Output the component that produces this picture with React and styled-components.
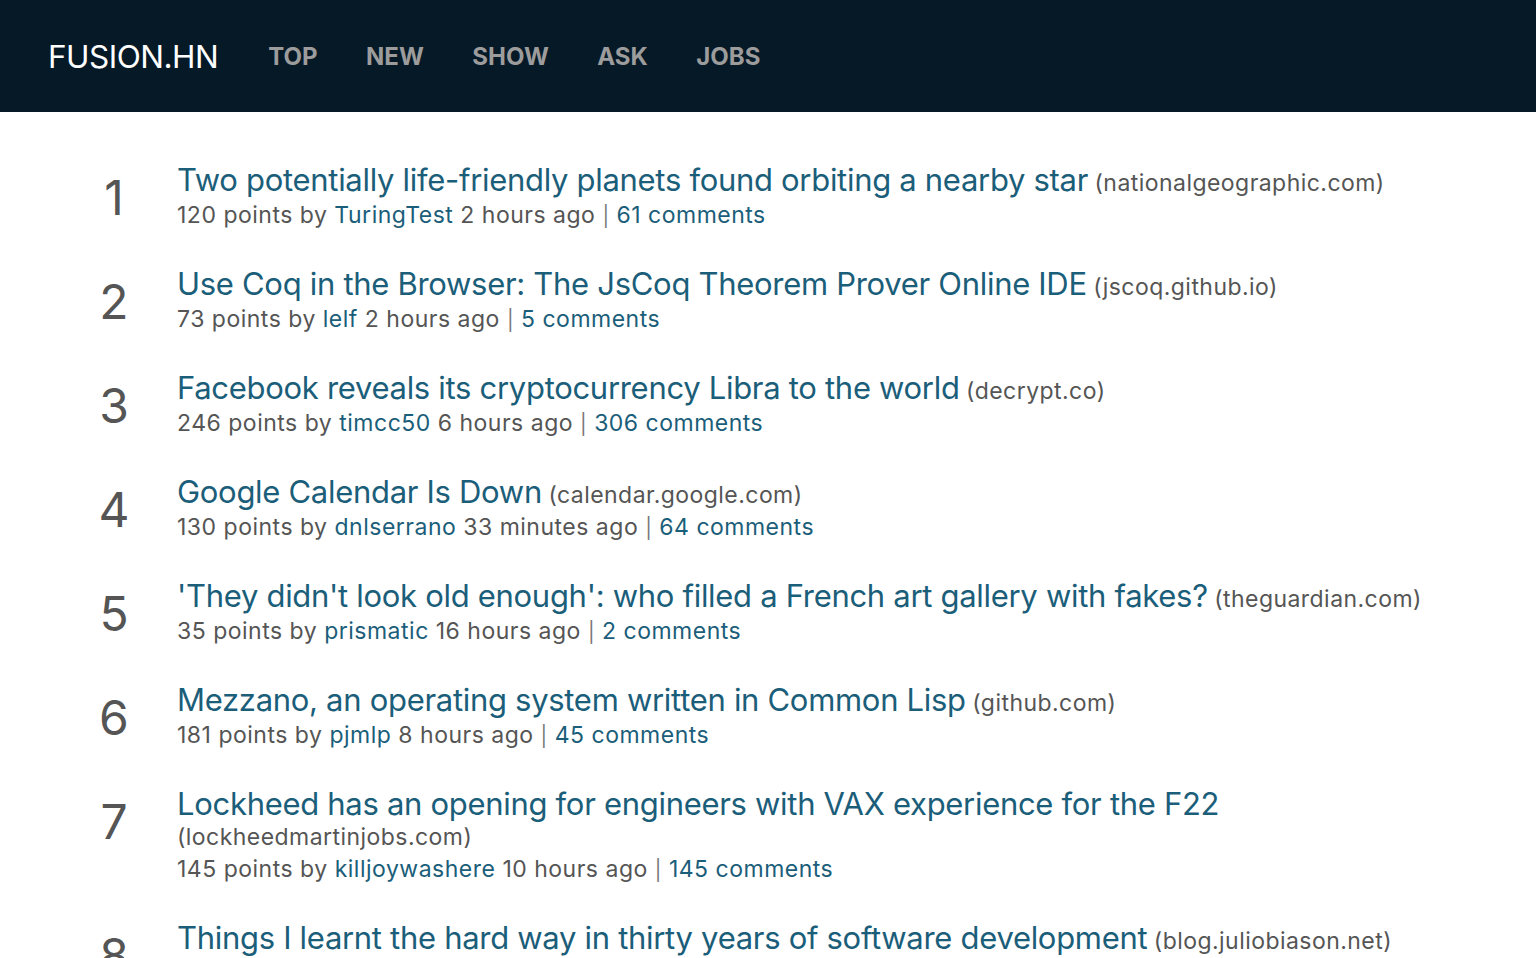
import styled, { createGlobalStyle } from "styled-components";

const stories = [
  {
    title: "Two potentially life-friendly planets found orbiting a nearby star",
    domain: "nationalgeographic.com",
    points: 120,
    user: "TuringTest",
    time: "2 hours ago",
    comments: 61,
  },
  {
    title: "Use Coq in the Browser: The JsCoq Theorem Prover Online IDE",
    domain: "jscoq.github.io",
    points: 73,
    user: "lelf",
    time: "2 hours ago",
    comments: 5,
  },
  {
    title: "Facebook reveals its cryptocurrency Libra to the world",
    domain: "decrypt.co",
    points: 246,
    user: "timcc50",
    time: "6 hours ago",
    comments: 306,
  },
  {
    title: "Google Calendar Is Down",
    domain: "calendar.google.com",
    points: 130,
    user: "dnlserrano",
    time: "33 minutes ago",
    comments: 64,
  },
  {
    title: "'They didn't look old enough': who filled a French art gallery with fakes?",
    domain: "theguardian.com",
    points: 35,
    user: "prismatic",
    time: "16 hours ago",
    comments: 2,
  },
  {
    title: "Mezzano, an operating system written in Common Lisp",
    domain: "github.com",
    points: 181,
    user: "pjmlp",
    time: "8 hours ago",
    comments: 45,
  },
  {
    title: "Lockheed has an opening for engineers with VAX experience for the F22",
    domain: "lockheedmartinjobs.com",
    points: 145,
    user: "killjoywashere",
    time: "10 hours ago",
    comments: 145,
  },
  {
    title: "Things I learnt the hard way in thirty years of software development",
    domain: "blog.juliobiason.net",
    points: 512,
    user: "signa11",
    time: "12 hours ago",
    comments: 198,
  },
];

export default function App() {
  return (
    <>
      <GlobalStyle />
      <Header>
        <Logo href="#">FUSION.HN</Logo>
        <Nav>
          {["Top", "New", "Show", "Ask", "Jobs"].map((n) => (
            <NavLink key={n} href="#">
              {n}
            </NavLink>
          ))}
        </Nav>
      </Header>
      <List>
        {stories.map((s, i) => (
          <Item key={i}>
            <Rank>{i + 1}</Rank>
            <Body>
              <TitleLine>
                <Title href="#">{s.title}</Title> <Domain>({s.domain})</Domain>
              </TitleLine>
              <Meta>
                {s.points} points by <MetaLink href="#">{s.user}</MetaLink>{" "}
                {s.time} <Pipe>|</Pipe>{" "}
                <MetaLink href="#">{s.comments} comments</MetaLink>
              </Meta>
            </Body>
          </Item>
        ))}
      </List>
    </>
  );
}

const GlobalStyle = createGlobalStyle`
  body {
    margin: 0;
    background: #fff;
    font-family: Inter, "Noto Sans", sans-serif;
    overflow: hidden;
  }
`;

const Header = styled.header`
  height: 112px;
  background: #061927;
  display: flex;
  align-items: center;
  padding: 0 48px;
  box-sizing: border-box;
`;

const Logo = styled.a`
  color: #fff;
  font-size: 31.5px;
  font-weight: 400;
  letter-spacing: -0.5px;
  text-decoration: none;
  margin-right: 50px;
`;

const Nav = styled.nav`
  display: flex;
  gap: 48.5px;
`;

const NavLink = styled.a`
  color: #9c9c9c;
  font-size: 24px;
  font-weight: 700;
  text-transform: uppercase;
  text-decoration: none;
`;

const List = styled.ol`
  list-style: none;
  margin: 0;
  padding: 49px 0 0 80px;
`;

const Item = styled.li`
  display: flex;
  align-items: flex-start;
  margin-bottom: 33px;
`;

const Rank = styled.div`
  width: 68px;
  margin-right: 29px;
  text-align: center;
  font-size: 48px;
  font-weight: 400;
  color: #555;
  line-height: 1;
  padding-top: 13px;
  flex-shrink: 0;
`;

const Body = styled.div`
  flex: 1;
  padding-right: 100px;
`;

const TitleLine = styled.div`
  font-size: 23px;
  line-height: 30px;
  color: #555;
`;

const Title = styled.a`
  font-size: 31px;
  line-height: 37px;
  color: #1b5e7a;
  text-decoration: none;
  letter-spacing: -0.3px;
`;

const Domain = styled.span`
  letter-spacing: 0.45px;
`;

const Meta = styled.div`
  padding-top: 1px;
  font-size: 23px;
  line-height: 32px;
  letter-spacing: 0.5px;
  color: #555;
`;

const MetaLink = styled.a`
  color: #1b5e7a;
  text-decoration: none;
`;

const Pipe = styled.span`
  font-size: 20px;
  color: #777;
`;
